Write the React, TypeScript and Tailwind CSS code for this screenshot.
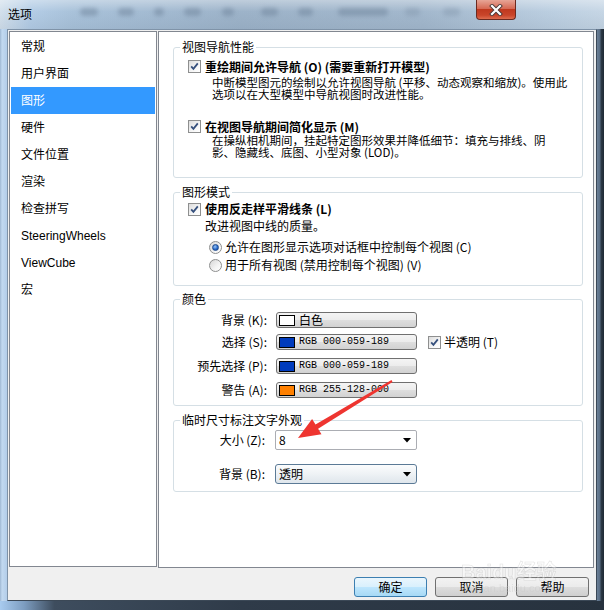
import React from 'react';

const FONT = { fontFamily: '"Noto Sans CJK SC", "Liberation Sans", sans-serif' };
const LIST_FONT = { fontFamily: '"Liberation Sans", "Noto Sans CJK SC", sans-serif' };
const MONO = { fontFamily: '"Liberation Mono", "Noto Sans CJK SC", monospace' };

const NAV_ITEMS = ['常规', '用户界面', '图形', '硬件', '文件位置', '渲染', '检查拼写', 'SteeringWheels', 'ViewCube', '宏'];

function CheckBox() {
  return (
    <div className="h-[13px] w-[13px] shrink-0 border border-[#8e8f8f] bg-[linear-gradient(135deg,#dcdcdc_0%,#f6f6f6_60%,#ffffff_100%)]">
      <svg width="11" height="11" viewBox="0 0 11 11">
        <path d="M2.2 5.4 L4.4 7.8 L8.8 2.4" fill="none" stroke="#36507d" strokeWidth="1.8" />
      </svg>
    </div>
  );
}

function Radio({ checked }: { checked?: boolean }) {
  return (
    <div className="flex h-[13px] w-[13px] shrink-0 items-center justify-center rounded-full border border-[#8e8f8f] bg-[linear-gradient(135deg,#d6d6d6_0%,#f4f4f4_60%,#ffffff_100%)]">
      {checked ? (
        <div className="h-[7px] w-[7px] rounded-full border border-[#1f4c8f] bg-[radial-gradient(circle_at_40%_35%,#9cc6f5_0%,#2a6ccc_55%,#0d3c8c_100%)]" />
      ) : null}
    </div>
  );
}

function DownArrow() {
  return (
    <svg width="8" height="5" viewBox="0 0 8 5" className="shrink-0">
      <polygon points="0,0 8,0 4,4.5" fill="#000" />
    </svg>
  );
}

function ColorButton({ color, label, mono }: { color: string; label: string; mono?: boolean }) {
  return (
    <div className="flex h-[16px] w-[141px] items-center rounded-[3px] border border-[#707070] bg-[linear-gradient(180deg,#f4f4f4_0%,#ececec_50%,#dedede_51%,#d2d2d2_100%)]">
      <div className="ml-[2px] h-[11px] w-[16px] border border-black" style={{ backgroundColor: color }} />
      <span
        className={mono ? 'ml-[4px] text-[10px] leading-[14px] text-black' : 'ml-[4px] text-[12px] leading-[14px] text-black'}
        style={mono ? MONO : FONT}
      >
        {label}
      </span>
    </div>
  );
}

function Legend({ children }: { children: React.ReactNode }) {
  return <legend className="ml-[6px] px-[2px] text-[12px] leading-[16px] text-black">{children}</legend>;
}

function SysButton({ children, primary }: { children: React.ReactNode; primary?: boolean }) {
  return (
    <div
      className={
        primary
          ? 'flex h-[20px] w-[73px] items-center justify-center rounded-[3px] border border-[#3c7fb1] bg-[linear-gradient(180deg,#eaf6fd_0%,#d9f0fc_50%,#bee6fd_51%,#a7d9f5_100%)] text-[12px] text-black'
          : 'flex h-[20px] w-[73px] items-center justify-center rounded-[3px] border border-[#707070] bg-[linear-gradient(180deg,#f2f2f2_0%,#ebebeb_50%,#dddddd_51%,#cfcfcf_100%)] text-[12px] text-black'
      }
    >
      {children}
    </div>
  );
}

export default function App() {
  return (
    <div className="relative flex h-[610px] w-[604px] flex-col overflow-hidden bg-[#2c3846]" style={FONT}>
      {/* title bar */}
      <div className="relative flex h-[29px] items-start bg-[linear-gradient(90deg,#d3e0ec_0%,#b4cde6_5%,#a9c2da_12%,#9db3c9_40%,#a3b8cd_70%,#bccfe1_92%,#c6d6e5_100%)]">
        <div className="pointer-events-none absolute inset-0 bg-[linear-gradient(180deg,rgba(255,255,255,0.35)_0%,rgba(255,255,255,0)_40%,rgba(60,80,100,0.08)_100%)]" />
        <div className="pointer-events-none absolute left-[80px] top-[8px] h-[8px] w-[18px] rounded-sm bg-[#6f849b] opacity-50 blur-[2px]" />
        <div className="pointer-events-none absolute left-[118px] top-[8px] h-[8px] w-[16px] rounded-sm bg-[#6f849b] opacity-50 blur-[2px]" />
        <div className="pointer-events-none absolute left-[154px] top-[8px] h-[8px] w-[10px] rounded-sm bg-[#6f849b] opacity-50 blur-[2px]" />
        <div className="pointer-events-none absolute left-[184px] top-[8px] h-[8px] w-[17px] rounded-sm bg-[#6f849b] opacity-50 blur-[2px]" />
        <div className="pointer-events-none absolute left-[222px] top-[8px] h-[8px] w-[12px] rounded-sm bg-[#6f849b] opacity-50 blur-[2px]" />
        <div className="pointer-events-none absolute left-[261px] top-[8px] h-[8px] w-[17px] rounded-sm bg-[#6f849b] opacity-50 blur-[2px]" />
        <div className="pointer-events-none absolute left-[298px] top-[8px] h-[8px] w-[15px] rounded-sm bg-[#6f849b] opacity-50 blur-[2px]" />
        <div className="pointer-events-none absolute left-[338px] top-[8px] h-[8px] w-[50px] rounded-sm bg-[#6f849b] opacity-50 blur-[2px]" />
        <div className="pointer-events-none absolute left-[405px] top-[8px] h-[8px] w-[15px] rounded-sm bg-[#7f93a8] opacity-40 blur-[2px]" />
        <div className="pointer-events-none absolute left-[443px] top-[8px] h-[8px] w-[17px] rounded-sm bg-[#7f93a8] opacity-40 blur-[2px]" />
        <span className="relative ml-[8px] mt-[6px] text-[12px] leading-[16px] text-black">选项</span>
        <div className="flex-1" />
        <div className="relative mr-[88px] flex h-[20px] w-[40px] items-center justify-center rounded-b-[4px] border border-t-0 border-[#6b2a20] bg-[linear-gradient(180deg,#e7a596_0%,#d66a55_45%,#c0391f_50%,#c9452a_80%,#de6d4f_100%)]">
          <svg width="14" height="12" viewBox="0 0 14 12">
            <path d="M3 2 L11 10 M11 2 L3 10" stroke="#4a3a38" strokeWidth="4" strokeLinecap="square" />
            <path d="M3 2 L11 10 M11 2 L3 10" stroke="#ffffff" strokeWidth="2.2" strokeLinecap="square" />
          </svg>
        </div>
      </div>

      {/* middle: frames + client */}
      <div className="flex h-[572px]">
        <div className="w-[7px] bg-[linear-gradient(90deg,#9fb8d3_0%,#c2d9f0_30%,#b3cde9_100%)]" />
        <div className="flex w-[590px] flex-col border border-[#7f93a8] border-b-[#3b4856] border-r-[#3b4856] bg-[#f0f0f0]">
          <div className="flex pl-[1px] pt-[1px]">
            {/* nav list */}
            <div className="h-[536px] w-[148px] border border-[#828790] bg-white pt-[1px]" style={LIST_FONT}>
              {NAV_ITEMS.map((item) => (
                <div
                  key={item}
                  className={
                    item === '图形'
                      ? 'mx-[1px] flex h-[27px] items-center bg-[#3399ff] pl-[10px] text-[12px] text-white'
                      : 'mx-[1px] flex h-[27px] items-center pl-[10px] text-[12px] text-black'
                  }
                >
                  {item}
                </div>
              ))}
            </div>

            {/* settings panel */}
            <div className="ml-[1px] h-[537px] w-[436px] border border-[#828790] bg-white pl-[14px] pt-[7px]">
              {/* 视图导航性能 */}
              <fieldset className="h-[139px] w-[410px] rounded-[3px] border border-[#d5dfe5]">
                <Legend>视图导航性能</Legend>
                <div className="mt-[5px] flex items-start pl-[14px]">
                  <CheckBox />
                  <div className="ml-[4px] flex flex-col">
                    <div className="whitespace-nowrap text-[12px] font-bold leading-[14px] text-black">重绘期间允许导航 (O) (需要重新打开模型)</div>
                    <div className="ml-[7px] mt-[2px] flex flex-col whitespace-nowrap text-[11.5px] leading-[12px] text-black">
                      <span>中断模型图元的绘制以允许视图导航 (平移、动态观察和缩放)。使用此</span>
                      <span>选项以在大型模型中导航视图时改进性能。</span>
                    </div>
                  </div>
                </div>
                <div className="mt-[20px] flex items-start pl-[14px]">
                  <CheckBox />
                  <div className="ml-[4px] flex flex-col">
                    <div className="whitespace-nowrap text-[12px] font-bold leading-[14px] text-black">在视图导航期间简化显示 (M)</div>
                    <div className="ml-[7px] flex flex-col whitespace-nowrap text-[11.5px] leading-[12px] text-black">
                      <span>在操纵相机期间，挂起特定图形效果并降低细节：填充与排线、阴</span>
                      <span>影、隐藏线、底图、小型对象 (LOD)。</span>
                    </div>
                  </div>
                </div>
              </fieldset>

              {/* 图形模式 */}
              <fieldset className="mt-[6px] h-[102px] w-[410px] rounded-[3px] border border-[#d5dfe5]">
                <Legend>图形模式</Legend>
                <div className="mt-[2px] flex items-start pl-[14px]">
                  <div className="mt-[1px]">
                    <CheckBox />
                  </div>
                  <div className="ml-[4px] flex flex-col">
                    <div className="text-[12px] font-bold leading-[14px] text-black">使用反走样平滑线条 (L)</div>
                    <div className="mt-[4px] text-[12px] leading-[12px] text-black">改进视图中线的质量。</div>
                  </div>
                </div>
                <div className="mt-[6px] flex h-[18px] items-center pl-[35px]">
                  <Radio checked />
                  <span className="ml-[3px] text-[12px] leading-[18px] text-black">允许在图形显示选项对话框中控制每个视图 (C)</span>
                </div>
                <div className="flex h-[18px] items-center pl-[35px]">
                  <Radio />
                  <span className="ml-[3px] text-[12px] leading-[18px] text-black">用于所有视图 (禁用控制每个视图) (V)</span>
                </div>
              </fieldset>

              {/* 颜色 */}
              <fieldset className="mt-[5px] h-[115px] w-[410px] rounded-[3px] border border-[#d5dfe5]">
                <Legend>颜色</Legend>
                <div className="mt-[5px] flex h-[16px] items-center">
                  <span className="w-[93px] text-right text-[12px] leading-[16px] text-black">背景 (K):</span>
                  <div className="ml-[9px]">
                    <ColorButton color="#ffffff" label="白色" />
                  </div>
                </div>
                <div className="mt-[6px] flex h-[16px] items-center">
                  <span className="w-[93px] text-right text-[12px] leading-[16px] text-black">选择 (S):</span>
                  <div className="ml-[9px]">
                    <ColorButton color="#003bbd" label="RGB 000-059-189" mono />
                  </div>
                  <div className="ml-[11px]">
                    <CheckBox />
                  </div>
                  <span className="ml-[3px] text-[12px] leading-[16px] text-black">半透明 (T)</span>
                </div>
                <div className="mt-[8px] flex h-[16px] items-center">
                  <span className="w-[93px] text-right text-[12px] leading-[16px] text-black">预先选择 (P):</span>
                  <div className="ml-[9px]">
                    <ColorButton color="#003bbd" label="RGB 000-059-189" mono />
                  </div>
                </div>
                <div className="mt-[8px] flex h-[16px] items-center">
                  <span className="w-[93px] text-right text-[12px] leading-[16px] text-black">警告 (A):</span>
                  <div className="ml-[9px]">
                    <ColorButton color="#ff8000" label="RGB 255-128-000" mono />
                  </div>
                </div>
              </fieldset>

              {/* 临时尺寸标注文字外观 */}
              <fieldset className="mt-[6px] h-[80px] w-[410px] rounded-[3px] border border-[#d5dfe5]">
                <Legend>临时尺寸标注文字外观</Legend>
                <div className="mt-[2px] flex h-[20px] items-center">
                  <span className="w-[91px] text-right text-[12px] leading-[16px] text-black">大小 (Z):</span>
                  <div className="ml-[10px] flex h-[20px] w-[142px] items-center rounded-[2px] border border-[#abadb3] bg-white pl-[3px] pr-[5px]">
                    <span className="flex-1 text-[12px] leading-[16px] text-black">8</span>
                    <DownArrow />
                  </div>
                </div>
                <div className="mt-[14px] flex h-[20px] items-center">
                  <span className="w-[91px] text-right text-[12px] leading-[16px] text-black">背景 (B):</span>
                  <div className="ml-[10px] flex h-[20px] w-[142px] items-center rounded-[3px] border border-[#5b7a96] bg-[linear-gradient(180deg,#fbfcfd_0%,#eef2f5_50%,#dfe6ec_100%)] pl-[3px] pr-[5px]">
                    <span className="flex-1 text-[12px] leading-[16px] text-black">透明</span>
                    <DownArrow />
                  </div>
                </div>
              </fieldset>
            </div>
          </div>

          {/* dialog buttons */}
          <div className="mt-[9px] flex justify-end gap-[8px] pr-[7px]">
            <SysButton primary>确定</SysButton>
            <SysButton>取消</SysButton>
            <SysButton>帮助</SysButton>
          </div>
        </div>
        <div className="w-[7px] bg-[linear-gradient(90deg,#6b8097_0%,#5a6e85_40%,#2c3946_60%,#1f2934_100%)]" />
      </div>

      {/* bottom frame */}
      <div className="h-[9px] bg-[linear-gradient(90deg,#a8cbef_0%,#7d9dc0_4%,#3e4d5e_9%,#2f3b49_40%,#27323e_100%)]" />

      {/* watermark */}
      <div className="pointer-events-none absolute left-[461px] top-[562px] flex flex-col items-start opacity-40">
        <span
          className="text-[20px] font-bold leading-[20px] text-white"
          style={{ fontFamily: '"Liberation Sans", "Noto Sans CJK SC", sans-serif', WebkitTextStroke: '0.6px #b8b8b8' }}
        >
          Baidu经验
        </span>
        <span className="mt-[1px] text-[11px] leading-[11px] text-[#c8c8c8]" style={LIST_FONT}>
          jingyan.baidu.com
        </span>
      </div>

      {/* red annotation arrow */}
      <svg className="pointer-events-none absolute left-0 top-0" width="604" height="610" viewBox="0 0 604 610">
        <polygon
          points="298,438 321.5,434.3 318.1,428.7 392.5,381.9 391.5,380.1 315.5,424.5 312.1,418.9"
          fill="#ee3530"
        />
      </svg>
    </div>
  );
}
